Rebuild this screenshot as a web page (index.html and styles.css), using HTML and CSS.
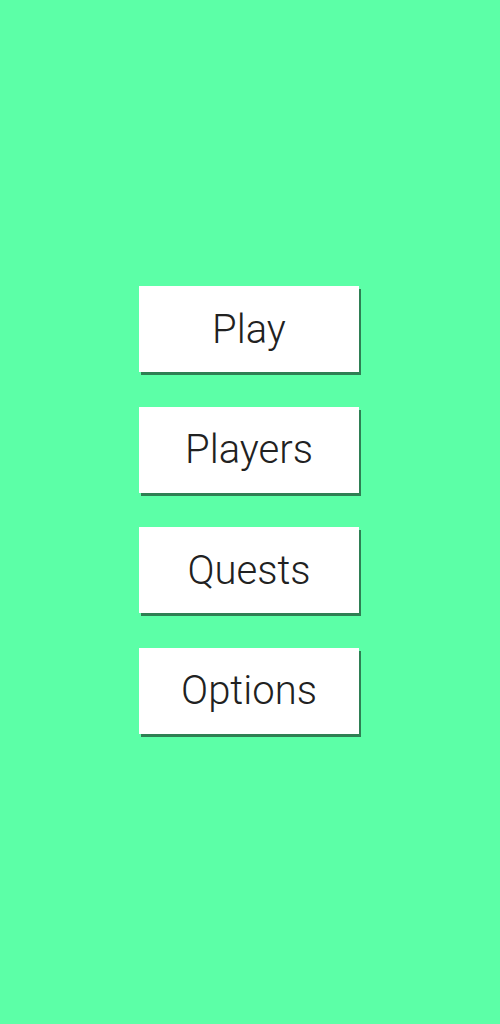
FILE: index.html
```html
<!DOCTYPE html>
<html>
<head>
<meta charset="utf-8">
<link rel="stylesheet" href="styles.css">
</head>
<body>
<main class="menu">
  <button class="menu-btn">Play</button>
  <button class="menu-btn">Players</button>
  <button class="menu-btn">Quests</button>
  <button class="menu-btn">Options</button>
</main>
</body>
</html>
```
FILE: styles.css
```css
html, body {
  margin: 0;
  padding: 0;
  height: 100%;
}
body {
  background: #5cffa7;
  font-family: Roboto, "Liberation Sans", sans-serif;
}
.menu {
  height: 1024px;
  display: flex;
  flex-direction: column;
  align-items: center;
  justify-content: center;
  gap: 34.67px;
  padding-right: 2px;
  padding-bottom: 4px;
  box-sizing: border-box;
}
.menu-btn {
  width: 220px;
  height: 86px;
  border: none;
  background: #ffffff;
  color: #212121;
  font-family: Roboto, "Liberation Sans", sans-serif;
  font-weight: 300;
  font-size: 40px;
  padding: 0;
  box-shadow: 2px 3px 0 rgba(0, 0, 0, 0.5);
}
```
